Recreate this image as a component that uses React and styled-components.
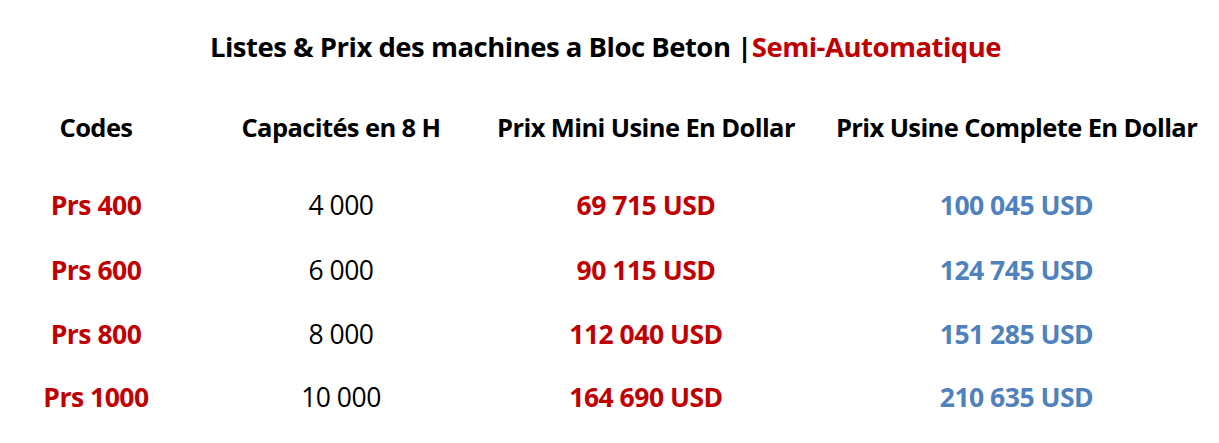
import styled, { createGlobalStyle } from 'styled-components';

const ROWS = [
  { code: 'Prs 400', capacity: '4 000', mini: '69 715 USD', complete: '100 045 USD' },
  { code: 'Prs 600', capacity: '6 000', mini: '90 115 USD', complete: '124 745 USD' },
  { code: 'Prs 800', capacity: '8 000', mini: '112 040 USD', complete: '151 285 USD' },
  { code: 'Prs 1000', capacity: '10 000', mini: '164 690 USD', complete: '210 635 USD' },
];

const HEADERS = ['Codes', 'Capacités en 8 H', 'Prix Mini Usine En Dollar', 'Prix Usine Complete En Dollar'];

export default function App() {
  return (
    <>
      <GlobalStyle />
      <Page>
        <Title>
          Listes &amp; Prix des machines a Bloc Beton |<TitleAccent>Semi-Automatique</TitleAccent>
        </Title>

        <PriceGrid>
          {HEADERS.map((h, i) => (
            <HeadCell key={h} $last={i === 3}>{h}</HeadCell>
          ))}
          <Spacer />
          {ROWS.map((row) => (
            <Row key={row.code}>
              <Cell $tone="red" $bold>{row.code}</Cell>
              <Cell>{row.capacity}</Cell>
              <Cell $tone="red" $bold>{row.mini}</Cell>
              <Cell $tone="blue" $bold $last>{row.complete}</Cell>
            </Row>
          ))}
        </PriceGrid>
      </Page>
    </>
  );
}

const GlobalStyle = createGlobalStyle`
  html, body {
    margin: 0;
    padding: 0;
    background: #ffffff;
    overflow: hidden;
  }
  body {
    font-family: 'Open Sans', 'Noto Sans', sans-serif;
  }
`;

const TONES = {
  black: '#000000',
  red: '#c00000',
  blue: '#4f81bd',
};

const Page = styled.div`
  width: 1219px;
  height: 443px;
  display: flex;
  flex-direction: column;
`;

const Title = styled.h1`
  margin: 0;
  flex-shrink: 0;
  height: 92px;
  display: flex;
  align-items: center;
  justify-content: center;
  padding-right: 8px;
  font-size: 27.5px;
  font-weight: 700;
  letter-spacing: -0.5px;
  color: #000;
  white-space: pre;
`;

const TitleAccent = styled.span`
  color: ${TONES.red};
`;

const PriceGrid = styled.div`
  margin-top: 3px;
  flex-shrink: 0;
  display: grid;
  grid-template-columns: 192px 298px 312px 1fr;
  grid-template-rows: 64px 14px 64px 65px 63px 64px;
`;

const Spacer = styled.div`
  grid-column: 1 / -1;
`;

const Row = styled.div`
  display: contents;
`;

const HeadCell = styled.div`
  display: flex;
  align-items: center;
  justify-content: center;
  padding-left: ${({ $last }) => ($last ? '12px' : '0')};
  font-size: 25.5px;
  font-weight: 700;
  letter-spacing: -0.6px;
  color: #000;
  white-space: nowrap;
`;

const Cell = styled.div`
  display: flex;
  align-items: center;
  justify-content: center;
  padding-left: ${({ $last }) => ($last ? '12px' : '0')};
  font-size: 26.5px;
  font-weight: ${({ $bold }) => ($bold ? 700 : 400)};
  letter-spacing: -0.5px;
  color: ${({ $tone }) => TONES[$tone || 'black']};
  white-space: nowrap;
`;
